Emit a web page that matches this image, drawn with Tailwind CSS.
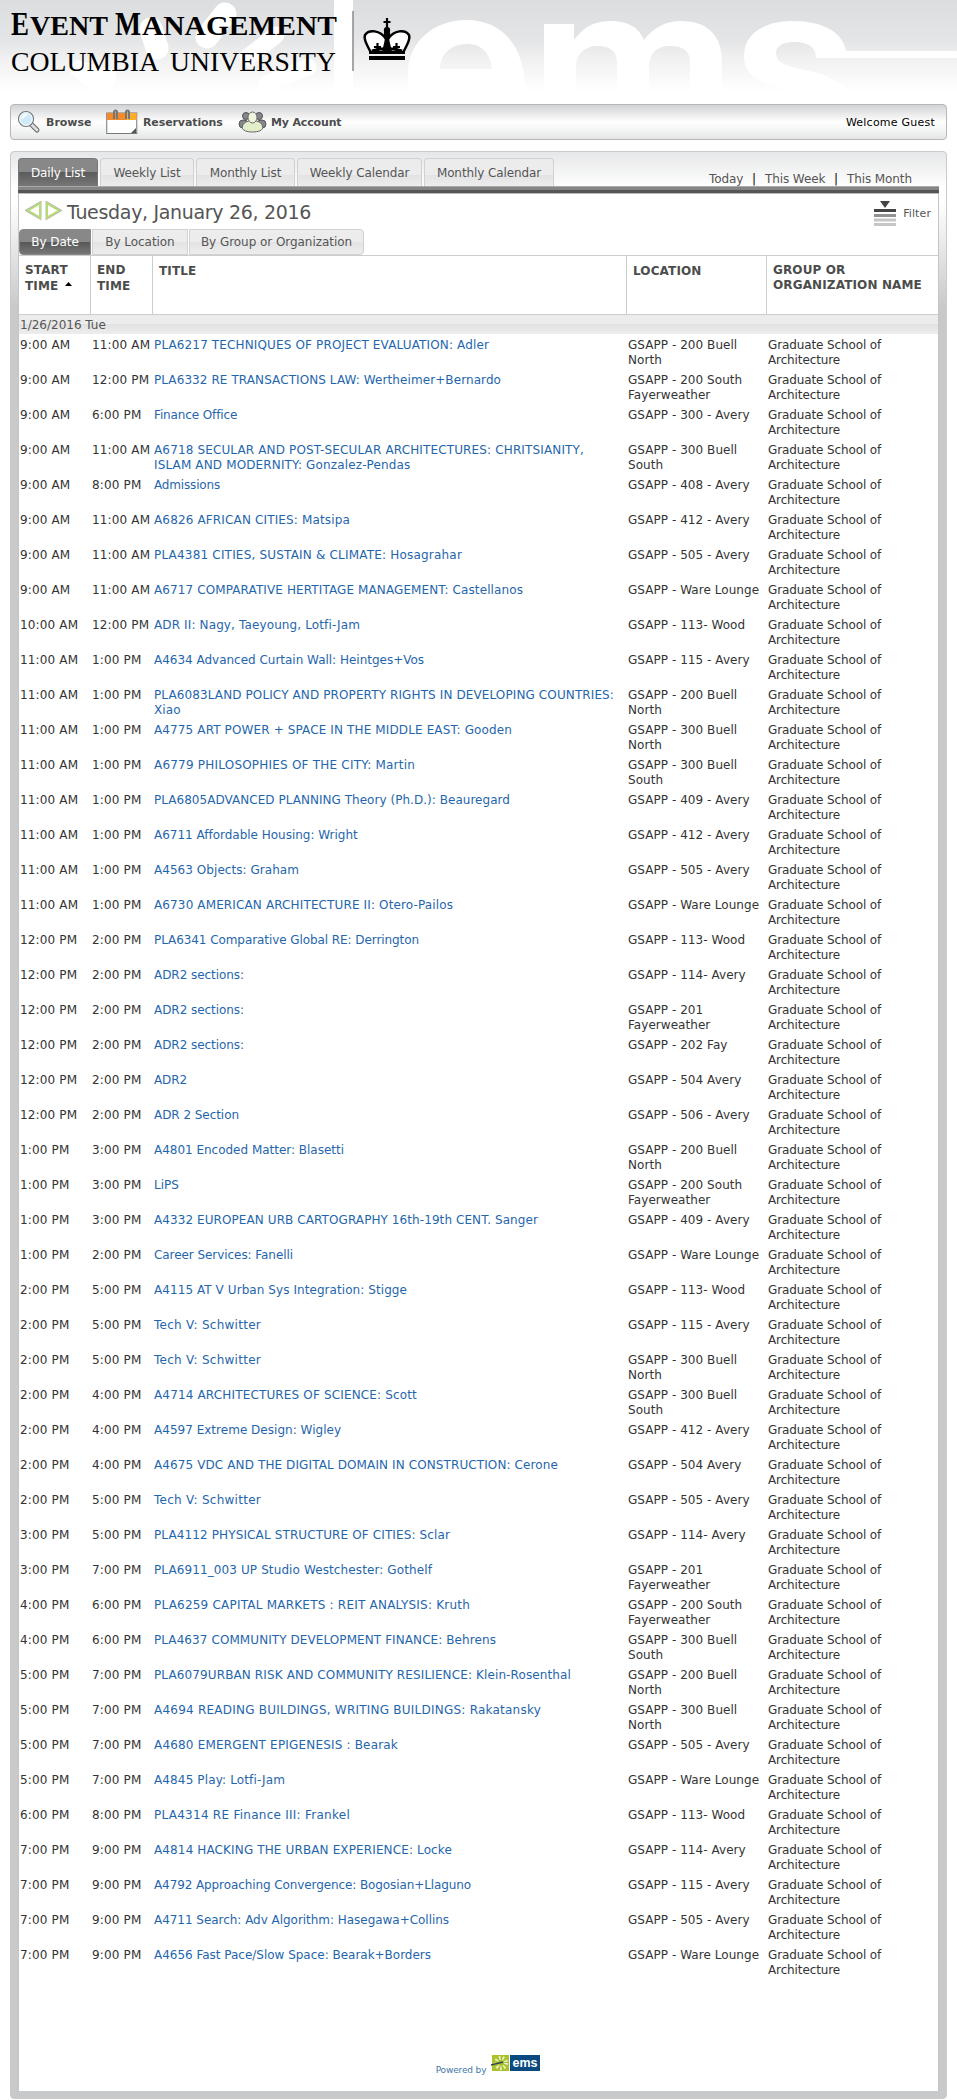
<!DOCTYPE html>
<html lang="en"><head><meta charset="utf-8"><title>Event Management</title>
<script src="https://cdn.jsdelivr.net/npm/@tailwindcss/browser@4"></script></head>
<body class="bg-white font-['DejaVu_Sans',sans-serif] text-[12px] leading-[15px] text-[#333] w-[957px] h-[2100px] overflow-hidden">
<header class="h-[104px]">
<svg class="block" width="957" height="104" viewBox="0 0 957 104">
<defs><linearGradient id="g" x1="0" y1="0" x2="0" y2="1"><stop offset="0" stop-color="#dcdddf"/><stop offset=".42" stop-color="#e4e5e6"/><stop offset=".6" stop-color="#f0f0f1"/><stop offset=".95" stop-color="#fff"/></linearGradient></defs>
<rect width="957" height="96" fill="url(#g)"/>
<g fill="#fff" stroke="#fff" stroke-linecap="round">
<rect x="334" y="0" width="19" height="104" stroke="none"/>
<path fill="none" stroke-width="23" d="M151 29L157 48M225 14L207 37"/>
<path fill="none" stroke-width="17" d="M248 57L276 35M267 84L308 67"/>
<path stroke="none" d="M71 74Q68 68 76 60L115 70Q121 84 105 91Q96 94 86 86Z"/>
</g>
<path fill="#fff" fill-rule="evenodd" d="M408 90V73C408 42 434 20 466 20C504 20 525 48 525 90ZM440 69H492C490 52 481 44 467 44C450 44 440 55 440 69Z"/>
<path fill="#fff" d="M544 90V24H574V40C584 26 596 21 611 21C627 21 639 27 644 40C654 27 666 21 681 21C706 21 722 34 722 62V90H690V62C690 50 682 46 670 46C657 46 649 53 649 67V90H617V62C617 51 610 46 598 46C585 46 576 54 576 67V90Z"/>
<path fill="#fff" d="M744 56C744 34 764 21 793 21C824 21 843 33 846 51H957V58H816C816 47 808 42 794 42C783 42 776 46 776 53C776 63 786 66 805 70C826 75 836 79 846 89H785C758 84 744 74 744 56Z"/>
<path stroke="#8b898b" stroke-width="1.500" d="M353 11V71"/>
<g fill="#000" font-family="'Liberation Serif',serif">
<g font-weight="700">
<text x="11" y="34.500" font-size="34" textLength="18" lengthAdjust="spacingAndGlyphs">E</text>
<text x="30" y="34.500" font-size="28" textLength="78" lengthAdjust="spacingAndGlyphs">VENT</text>
<text x="115" y="34.500" font-size="34" textLength="26" lengthAdjust="spacingAndGlyphs">M</text>
<text x="142" y="34.500" font-size="28" textLength="195" lengthAdjust="spacingAndGlyphs">ANAGEMENT</text></g>
<text x="11" y="70.500" font-size="26.500" textLength="148" lengthAdjust="spacingAndGlyphs">COLUMBIA</text>
<text x="170" y="70.500" font-size="26.500" textLength="166" lengthAdjust="spacingAndGlyphs">UNIVERSITY</text>
</g>
<g transform="translate(363 18)">
<path d="M7.500 34C5 28 0 22 2 17C6 11 17 12 23 21L24 34ZM40.500 34C43 28 48 22 46 17C42 11 31 12 25 21L24 34Z" fill="#fff" stroke="#000" stroke-width="2.500"/>
<path d="M21 14Q20 9 24 9Q28 9 27 14Q28 18 26 21L29 34H19L22 21Q20 18 21 14Z"/>
<path d="M24 0V10M20.500 4H27.500M14.500 25V34M11 29H18M33.500 25V34M30 29H37" stroke="#000" stroke-width="2.200" fill="none"/>
<path d="M9 33Q24 28 39 33" stroke="#000" stroke-width="3" fill="none"/>
<path d="M6 33.500H42V36H6ZM6 38H42V42H6Z"/></g>
</svg>
</header>
<nav class="mx-[10px] w-[937px] h-[36px] border border-[#b5b7b8] rounded-[4px] bg-[linear-gradient(#d2d3d5,#ffffff_50%,#f5f6f6_70%,#e5e6e6)] flex items-center text-[11px] font-bold text-[#4c4c4c]">
<svg class="ml-[6px] shrink-0" width="24" height="24" viewBox="0 0 24 24"><path d="M14.500 14.500L20 20" stroke="#666" stroke-width="5" stroke-linecap="round"/><path d="M14.500 14.500L20 20" stroke="#ddd" stroke-width="3" stroke-linecap="round"/><circle cx="9" cy="9" r="7.500" fill="#cdeafa" stroke="#777" stroke-width="1.200"/><circle cx="9" cy="9" r="6.200" fill="none" stroke="#fff"/><path d="M5 9Q6 5 10 5" stroke="#fff" stroke-width="2" fill="none"/></svg>
<span class="ml-[5px] w-[60px]">Browse</span>
<svg class="shrink-0" width="32" height="26" viewBox="0 0 32 26"><rect x=".75" y="4" width="30" height="20.500" fill="#fff" stroke="#777"/><rect x="1" y="4" width="29.500" height="7" fill="#f58a2c"/><rect x="20" y="4" width="10.500" height="7" fill="#fbae2b"/><path d="M8 10V3Q8 1.500 9.500 1.500Q11 1.500 11 3V10M20 10V3Q20 1.500 21.500 1.500Q23 1.500 23 3V10" stroke="#777" stroke-width="2" fill="none"/><path d="M30 19V24H25Z" fill="#555"/></svg>
<span class="ml-[5px] w-[95px] tracking-[-0.1px]">Reservations</span>
<svg class="shrink-0" width="29" height="22" viewBox="0 0 29 22"><g fill="#85878a" stroke="#555"><circle cx="8" cy="5" r="3.500"/><circle cx="21" cy="5" r="3.500"/><rect x="1" y="9" width="9" height="8" rx="4"/><rect x="19" y="9" width="9" height="8" rx="4"/></g><path d="M4 17Q5 9 14.500 10Q24 9 25 17Q23 21 14.500 21Q6 21 4 17Z" fill="#e3eecb" stroke="#666"/><ellipse cx="14.500" cy="6.500" rx="4.500" ry="5.500" fill="#eef5de" stroke="#666"/></svg>
<span class="ml-[4px] tracking-[-0.15px]">My Account</span>
<span class="ml-auto mr-[11px] font-normal text-black tracking-[0.23px]">Welcome Guest</span>
</nav>
<main class="mt-[11px] mx-[10px] w-[937px] h-[1948px] rounded-[4px] border border-[#c9cacb] bg-[linear-gradient(#e6e7e8,#ffffff_36px,#ffffff_50px,#c8c9cb_155px,#c8c9cb)] pl-[7px]">
<div class="h-[34px] pt-[6px] flex gap-[2px] text-[#555] tracking-[-0.1px] whitespace-nowrap">
<a class="w-[80px] h-[28px] rounded-t-[4px] border border-b-0 border-[#777] bg-[linear-gradient(#888_50%,#5c5c5c_50%,#777)] text-white text-center leading-[28px]">Daily List</a>
<a class="w-[94px] h-[28px] rounded-t-[4px] border border-b-0 border-[#d0d1d2] bg-[linear-gradient(#ececec_60%,#e3e3e3_60%,#ededed)] text-center leading-[28px]">Weekly List</a>
<a class="w-[99px] h-[28px] rounded-t-[4px] border border-b-0 border-[#d0d1d2] bg-[linear-gradient(#ececec_60%,#e3e3e3_60%,#ededed)] text-center leading-[28px]">Monthly List</a>
<a class="w-[125px] h-[28px] rounded-t-[4px] border border-b-0 border-[#d0d1d2] bg-[linear-gradient(#ececec_60%,#e3e3e3_60%,#ededed)] text-center leading-[28px]">Weekly Calendar</a>
<a class="w-[130px] h-[28px] rounded-t-[4px] border border-b-0 border-[#d0d1d2] bg-[linear-gradient(#ececec_60%,#e3e3e3_60%,#ededed)] text-center leading-[28px]">Monthly Calendar</a>
<div class="ml-auto mr-[34px] pt-[14px] flex"><span class="w-[43px]">Today</span><span class="w-[13px] text-black">|</span><span class="w-[69px]">This Week</span><span class="w-[13px] text-black">|</span><span class="w-[65px]">This Month</span></div>
</div>
<div class="w-[921px] h-[8px] border-b border-[#bbb] bg-[linear-gradient(#aaa_1px,#858585_1px,#858585_4px,#555_4px)]"></div>
<section class="w-[921px] h-[1897px] bg-white border-x border-[#c4c5c7]">
<div class="h-[35px] flex text-[#555]">
<svg class="ml-[6px] mt-[7px]" width="37" height="20" viewBox="0 0 37 20"><g fill="#fff" stroke-linejoin="miter"><path d="M15 2V17L2 9.500ZM22 2V17L35 9.500Z" stroke="#b9bcb9" stroke-width="3"/><path d="M15 2.500V16.500L3 9.500ZM22 2.500V16.500L34 9.500Z" stroke="#b5dc72" stroke-width="2"/></g></svg>
<h1 class="ml-[5px] mt-[7px] text-[19px] leading-[22px] whitespace-nowrap tracking-[-0.32px]">Tuesday, January 26, 2016</h1>
<svg class="ml-auto mt-[6px]" width="24" height="28" viewBox="0 0 24 28"><path d="M7 1H17L12 8Z" fill="#444"/><path d="M1 9H23V12H1Z" fill="#444"/><path d="M1 14H23V17H1Z" fill="#929295"/><path d="M1 18.500H23V21.500H1ZM1 23H23V26H1Z" fill="#c5c6c8"/></svg>
<span class="ml-[6px] mr-[7px] mt-[12px] text-[11px] tracking-[0.1px]">Filter</span></div>
<div class="h-[26px] flex gap-px text-[#555] leading-[24px] text-center tracking-[-0.05px] whitespace-nowrap">
<a class="w-[72px] rounded-l-[4px] border border-[#888] bg-[linear-gradient(#888_48%,#555_48%,#777)] text-white">By Date</a>
<a class="w-[96px] border border-[#d0d1d2] bg-[linear-gradient(#ececec_48%,#e3e3e3_48%,#ededed)]">By Location</a>
<a class="w-[175px] rounded-r-[4px] border border-[#d0d1d2] bg-[linear-gradient(#ececec_48%,#e3e3e3_48%,#ededed)]">By Group or Organization</a></div>
<div class="grid grid-cols-[72px_62px_474px_140px_1fr] h-[59px] border-t border-[#cccdcf] font-bold text-[#4c4c4c] leading-[15px] tracking-[0.13px]">
<div class="pt-[6px] pl-[6px] border-r border-[#cccdcf] leading-[16px]">START<br>TIME <svg class="inline ml-[2px] mb-[5px]" width="7" height="4"><path d="M0 4L3.500 0L7 4Z"/></svg></div>
<div class="pt-[6px] pl-[6px] border-r border-[#cccdcf] leading-[16px]">END<br>TIME</div>
<div class="pt-[8px] pl-[6px] border-r border-[#cccdcf]">TITLE</div>
<div class="pt-[8px] pl-[6px] border-r border-[#cccdcf]">LOCATION</div>
<div class="pt-[7px] pl-[6px] whitespace-nowrap">GROUP OR<br>ORGANIZATION NAME</div></div>
<div class="h-[20px] border-t border-[#cccdcf] bg-[linear-gradient(#ececec_50%,#e2e2e2_50%,#ededed)] pl-[1px] leading-[20px] text-[#555]">1/26/2016 Tue</div>
<div id="rows" class="h-[1645px]"></div>
<footer class="h-[110px] pt-[76px] pl-[20px] flex justify-center text-[9px] text-[#47a]"><span class="mt-[8px] mr-[5px] tracking-[-0.15px]">Powered by</span><svg width="50" height="17" viewBox="0 0 50 17"><rect x="1" width="17" height="16" fill="#a9c22e"/><rect x="19" width="30" height="16" fill="#0a4a80"/><circle cx="10" cy="8" r="5" fill="none" stroke="#eef3c8" stroke-width="4" stroke-dasharray="1.500 2"/><path d="M0 10L12 7" stroke="#345" stroke-width="1.500"/><text x="21.500" y="11.500" fill="#fff" font-family="Liberation Sans,sans-serif" font-weight="700" font-size="12" textLength="25" lengthAdjust="spacingAndGlyphs">ems</text></svg></footer>
</section></main>
<script>
// start | end | title (~ breaks the line) | width of the first title line | room
const data=`9:00 AM|11:00 AM|PLA6217 TECHNIQUES OF PROJECT EVALUATION: Adler|335|200 Buell~North
9:00 AM|12:00 PM|PLA6332 RE TRANSACTIONS LAW: Wertheimer+Bernardo|347|200 South~Fayerweather
9:00 AM|6:00 PM|Finance Office|83|300 - Avery
9:00 AM|11:00 AM|A6718 SECULAR AND POST-SECULAR ARCHITECTURES: CHRITSIANITY,~ISLAM AND MODERNITY: Gonzalez-Pendas|430|300 Buell~South
9:00 AM|8:00 PM|Admissions|66|408 - Avery
9:00 AM|11:00 AM|A6826 AFRICAN CITIES: Matsipa|196|412 - Avery
9:00 AM|11:00 AM|PLA4381 CITIES, SUSTAIN & CLIMATE: Hosagrahar|308|505 - Avery
9:00 AM|11:00 AM|A6717 COMPARATIVE HERTITAGE MANAGEMENT: Castellanos|369|Ware Lounge
10:00 AM|12:00 PM|ADR II: Nagy, Taeyoung, Lotfi-Jam|206|113- Wood
11:00 AM|1:00 PM|A4634 Advanced Curtain Wall: Heintges+Vos|270|115 - Avery
11:00 AM|1:00 PM|PLA6083LAND POLICY AND PROPERTY RIGHTS IN DEVELOPING COUNTRIES:~Xiao|460|200 Buell~North
11:00 AM|1:00 PM|A4775 ART POWER + SPACE IN THE MIDDLE EAST: Gooden|358|300 Buell~North
11:00 AM|1:00 PM|A6779 PHILOSOPHIES OF THE CITY: Martin|261|300 Buell~South
11:00 AM|1:00 PM|PLA6805ADVANCED PLANNING Theory (Ph.D.): Beauregard|356|409 - Avery
11:00 AM|1:00 PM|A6711 Affordable Housing: Wright|204|412 - Avery
11:00 AM|1:00 PM|A4563 Objects: Graham|145|505 - Avery
11:00 AM|1:00 PM|A6730 AMERICAN ARCHITECTURE II: Otero-Pailos|299|Ware Lounge
12:00 PM|2:00 PM|PLA6341 Comparative Global RE: Derrington|265|113- Wood
12:00 PM|2:00 PM|ADR2 sections:|90|114- Avery
12:00 PM|2:00 PM|ADR2 sections:|90|201~Fayerweather
12:00 PM|2:00 PM|ADR2 sections:|90|202 Fay
12:00 PM|2:00 PM|ADR2|33|504 Avery
12:00 PM|2:00 PM|ADR 2 Section|85|506 - Avery
1:00 PM|3:00 PM|A4801 Encoded Matter: Blasetti|190|200 Buell~North
1:00 PM|3:00 PM|LiPS|25|200 South~Fayerweather
1:00 PM|3:00 PM|A4332 EUROPEAN URB CARTOGRAPHY 16th-19th CENT. Sanger|384|409 - Avery
1:00 PM|2:00 PM|Career Services: Fanelli|139|Ware Lounge
2:00 PM|5:00 PM|A4115 AT V Urban Sys Integration: Stigge|253|113- Wood
2:00 PM|5:00 PM|Tech V: Schwitter|107|115 - Avery
2:00 PM|5:00 PM|Tech V: Schwitter|107|300 Buell~North
2:00 PM|4:00 PM|A4714 ARCHITECTURES OF SCIENCE: Scott|263|300 Buell~South
2:00 PM|4:00 PM|A4597 Extreme Design: Wigley|187|412 - Avery
2:00 PM|4:00 PM|A4675 VDC AND THE DIGITAL DOMAIN IN CONSTRUCTION: Cerone|404|504 Avery
2:00 PM|5:00 PM|Tech V: Schwitter|107|505 - Avery
3:00 PM|5:00 PM|PLA4112 PHYSICAL STRUCTURE OF CITIES: Sclar|296|114- Avery
3:00 PM|7:00 PM|PLA6911_003 UP Studio Westchester: Gothelf|278|201~Fayerweather
4:00 PM|6:00 PM|PLA6259 CAPITAL MARKETS : REIT ANALYSIS: Kruth|316|200 South~Fayerweather
4:00 PM|6:00 PM|PLA4637 COMMUNITY DEVELOPMENT FINANCE: Behrens|342|300 Buell~South
5:00 PM|7:00 PM|PLA6079URBAN RISK AND COMMUNITY RESILIENCE: Klein-Rosenthal|417|200 Buell~North
5:00 PM|7:00 PM|A4694 READING BUILDINGS, WRITING BUILDINGS: Rakatansky|387|300 Buell~North
5:00 PM|7:00 PM|A4680 EMERGENT EPIGENESIS : Bearak|244|505 - Avery
5:00 PM|7:00 PM|A4845 Play: Lotfi-Jam|131|Ware Lounge
6:00 PM|8:00 PM|PLA4314 RE Finance III: Frankel|196|113- Wood
7:00 PM|9:00 PM|A4814 HACKING THE URBAN EXPERIENCE: Locke|298|114- Avery
7:00 PM|9:00 PM|A4792 Approaching Convergence: Bogosian+Llaguno|317|115 - Avery
7:00 PM|9:00 PM|A4711 Search: Adv Algorithm: Hasegawa+Collins|295|505 - Avery
7:00 PM|9:00 PM|A4656 Fast Pace/Slow Space: Bearak+Borders|277|Ware Lounge`;
const ctx=document.createElement('canvas').getContext('2d');ctx.font='12px "DejaVu Sans"';
document.getElementById('rows').innerHTML=data.split('\n').map(l=>{
const [s,e,t,w,r]=l.split('|');const first=t.split('~')[0];
const ls=((+w-ctx.measureText(first).width)/first.length).toFixed(3);
const esc=x=>x.replace(/&/g,'&amp;').replace(/~/g,'<br>');
return `<div class="grid grid-cols-[72px_62px_474px_140px_1fr] h-[35px] pt-[4px] whitespace-nowrap"><span class="pl-[1px] tracking-[0.15px]">${s}</span><span class="pl-[1px] tracking-[0.15px]">${e}</span><a class="pl-[1px] text-[#1f66ad]" style="letter-spacing:${ls}px">${esc(t)}</a><span class="pl-[1px] tracking-[0.05px]">GSAPP - ${esc(r)}</span><span class="pl-[1px] tracking-[-0.12px]">Graduate School of<br>Architecture</span></div>`}).join('');
</script></body></html>
